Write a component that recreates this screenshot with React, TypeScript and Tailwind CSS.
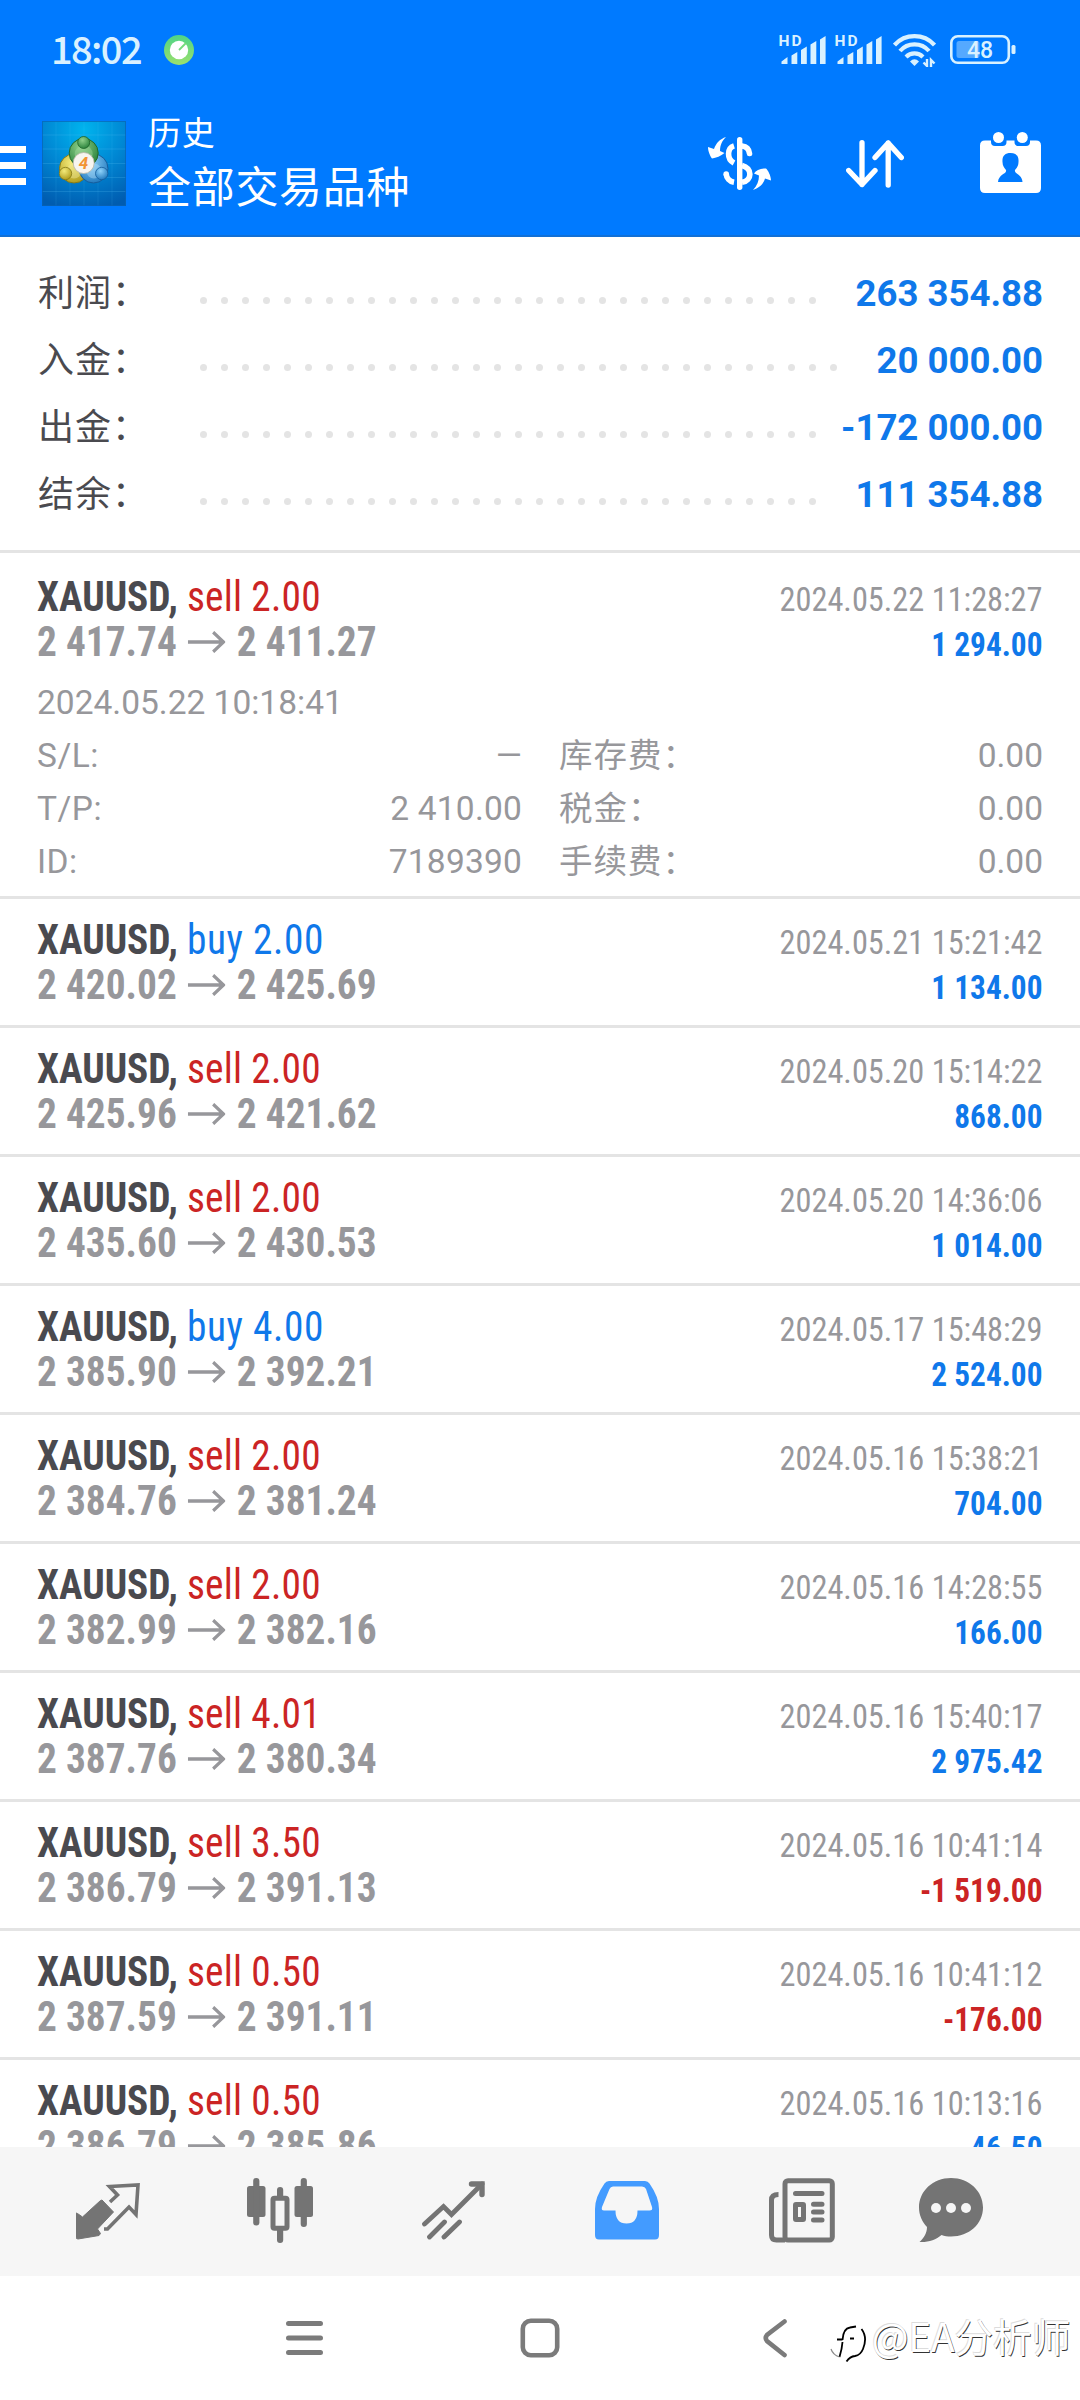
import cn from 'clsx';

interface Deal {
  side: 'buy' | 'sell';
  volume: string;
  open: string;
  close: string;
  time: string;
  profit: string;
}

const summary = [
  { label: '利润\uff1a', value: '263 354.88', dots: 30 },
  { label: '入金\uff1a', value: '20 000.00', dots: 31 },
  { label: '出金\uff1a', value: '-172 000.00', dots: 30 },
  { label: '结余\uff1a', value: '111 354.88', dots: 30 }
];

const deals: Deal[] = [
  { side: 'sell', volume: '2.00', open: '2 417.74', close: '2 411.27', time: '2024.05.22 11:28:27', profit: '1 294.00' },
  { side: 'buy', volume: '2.00', open: '2 420.02', close: '2 425.69', time: '2024.05.21 15:21:42', profit: '1 134.00' },
  { side: 'sell', volume: '2.00', open: '2 425.96', close: '2 421.62', time: '2024.05.20 15:14:22', profit: '868.00' },
  { side: 'sell', volume: '2.00', open: '2 435.60', close: '2 430.53', time: '2024.05.20 14:36:06', profit: '1 014.00' },
  { side: 'buy', volume: '4.00', open: '2 385.90', close: '2 392.21', time: '2024.05.17 15:48:29', profit: '2 524.00' },
  { side: 'sell', volume: '2.00', open: '2 384.76', close: '2 381.24', time: '2024.05.16 15:38:21', profit: '704.00' },
  { side: 'sell', volume: '2.00', open: '2 382.99', close: '2 382.16', time: '2024.05.16 14:28:55', profit: '166.00' },
  { side: 'sell', volume: '4.01', open: '2 387.76', close: '2 380.34', time: '2024.05.16 15:40:17', profit: '2 975.42' },
  { side: 'sell', volume: '3.50', open: '2 386.79', close: '2 391.13', time: '2024.05.16 10:41:14', profit: '-1 519.00' },
  { side: 'sell', volume: '0.50', open: '2 387.59', close: '2 391.11', time: '2024.05.16 10:41:12', profit: '-176.00' },
  { side: 'sell', volume: '0.50', open: '2 386.79', close: '2 385.86', time: '2024.05.16 10:13:16', profit: '46.50' }
];

const details = [
  { left: 'S/L:', value: '—', right: '库存费\uff1a', cost: '0.00' },
  { left: 'T/P:', value: '2 410.00', right: '税金\uff1a', cost: '0.00' },
  { left: 'ID:', value: '7189390', right: '手续费\uff1a', cost: '0.00' }
];

export default function App() {
  return (
    <div className="flex h-[2400px] w-[1080px] flex-col overflow-hidden bg-white [font-family:Roboto,'Noto_Sans_CJK_SC',sans-serif]">
      <StatusBar />
      <Header />
      <main className="h-[1910px] overflow-hidden">
        <section className="h-[316px] border-b-[3px] border-[#e4e4e4] pt-[20px] pr-[37px] pl-[38px]">
          {summary.map((row) => (
            <SummaryRow key={row.label} {...row} />
          ))}
        </section>
        {deals.map((deal, i) => (
          <DealRow key={deal.time} deal={deal} open={i === 0} />
        ))}
      </main>
      <TabBar />
      <SystemNav />
    </div>
  );
}

function StatusBar() {
  return (
    <div className="flex h-[100px] items-start bg-[#007aff] pr-[64px] pl-[51px] text-[#d9f1ff]">
      <span className="mt-[24px] w-[113px] text-[38px] leading-[48px] font-medium tracking-[-1.6px] [font-family:'Noto_Sans_CJK_SC',sans-serif]">
        18:02
      </span>
      <svg className="mt-[35px] h-[30px] w-[30px]" viewBox="0 0 30 30">
        <defs>
          <linearGradient id="green" x1="0" y1="0" x2="0" y2="1">
            <stop offset="0" stopColor="#4fd487" />
            <stop offset="1" stopColor="#9be06c" />
          </linearGradient>
        </defs>
        <circle cx="15" cy="15" r="15" fill="url(#green)" />
        <circle cx="15" cy="15" r="9.2" fill="#fff" />
        <path d="M15 15 L22 8" stroke="#74da7c" strokeWidth="1.8" />
      </svg>
      <div className="ml-auto flex items-start">
        <Signal />
        <Signal />
        <svg className="mt-[33px] ml-[2px] h-[34px] w-[43px]" viewBox="0 0 43 34" fill="none" stroke="currentColor" strokeWidth="4.2">
          <path d="M1.5 12 A27 27 0 0 1 41.5 12" />
          <path d="M7 18 A19 19 0 0 1 36 18" />
          <path d="M13 24 A12 12 0 0 1 30 24" />
          <path d="M21.500 33 L17 28.500 Q21.500 24 26 28.500 Z" fill="currentColor" stroke="none" />
          <path d="M34 26 V33 L30.500 29.500 M38 34 V27 L41.500 30.500" strokeWidth="2.4" />
        </svg>
        <svg className="mt-[35px] ml-[14px] h-[29px] w-[66px]" viewBox="0 0 66 29">
          <rect x="1.300" y="1.300" width="57.500" height="26.400" rx="6.500" fill="none" stroke="currentColor" strokeWidth="2.6" />
          <rect x="6.500" y="6" width="23" height="17" rx="2.500" fill="#55a9ff" />
          <rect x="61.500" y="10" width="4" height="9" rx="1.500" fill="currentColor" />
          <text x="30" y="23" textAnchor="middle" fontSize="23" fontWeight="500" fill="currentColor">
            48
          </text>
        </svg>
      </div>
    </div>
  );
}

function Signal() {
  return (
    <svg className="mt-[30px] h-[36px] w-[56px] overflow-visible" viewBox="0 -4 56 36" fill="currentColor">
      <text x="-0.5" y="12" fontSize="15.5" fontWeight="700" textLength="23">
        HD
      </text>
      <path d="M2.500 30 V27.500 L8.500 23 V30 Z M12.500 30 V21.500 L18.300 18 V30 Z M22 30 V16 L27.800 12.500 V30 Z M31.500 30 V10.500 L37.300 7 V30 Z M41 30 V5.500 L46.600 2 V30 Z" />
    </svg>
  );
}

function Header() {
  return (
    <header className="flex h-[137px] items-start border-b-2 border-[#1170d6] bg-[#007aff] pr-[39px] text-white">
      <div className="mt-[46px] flex w-[26px] flex-col gap-[9px]">
        <span className="h-[7px] bg-white" />
        <span className="h-[7px] bg-white" />
        <span className="h-[7px] bg-white" />
      </div>
      <AppLogo />
      <div className="mt-[7px] ml-[22px] [font-family:'Noto_Sans_CJK_SC',sans-serif]">
        <p className="text-[33px] leading-[48px] tracking-[0.7px]">历史</p>
        <h1 className="text-[43px] leading-[59px] tracking-[0.7px]">全部交易品种</h1>
      </div>
      <svg className="mt-[37px] ml-auto h-[53px] w-[63px]" viewBox="0 0 63 53" fill="none" stroke="currentColor" strokeWidth="5.6">
        <path d="M31.700 2.700 V50.300" strokeLinecap="round" strokeWidth="5.400" />
        <path d="M26 8.800 C19 11 18.500 22 26 26" />
        <path d="M34 9 C38.500 9.500 41 12 41.500 16.500" strokeLinecap="round" />
        <path d="M34 28.500 C44.500 31 44.500 43.500 34 45.300" />
        <path d="M18.200 37 C18.500 41 21.500 44.500 26 45.300" strokeLinecap="butt" />
        <circle cx="18.200" cy="37" r="2.800" fill="currentColor" stroke="none" />
        <path d="M18 0 C12 2 8 6 6 12 L0 10 C0 14 2 19 4 21.500 C8 21 13 19 16.500 16 L12 14 C12 8 14 4 18 0 Z" fill="currentColor" stroke="none" />
        <path d="M45 53 C51 51 55 48 57 41.500 L63 43.500 C63 39 60 33 58 31.500 C53 31.500 48 33 46 36.500 L51 38.500 C51 44 49 49 45 53 Z" fill="currentColor" stroke="none" />
      </svg>
      <svg className="mt-[40px] ml-[75px] h-[48px] w-[58px]" viewBox="0 0 58 48" fill="none" stroke="currentColor" strokeWidth="5.3" strokeLinecap="round" strokeLinejoin="round">
        <path d="M16 2.700 V44.500 M2.700 30.500 L16 44.500 L29 30.500" />
        <path d="M42.200 45 V3 M29 17.500 L42.200 3 L55.300 17.500" />
      </svg>
      <svg className="mt-[32px] ml-[76px] h-[61px] w-[61px]" viewBox="0 0 61 61" fill="currentColor">
        <path d="M5 8.500 H11 V10 Q11 14 15 14 H22.500 Q26.500 14 26.500 10 V8.500 H34.500 V10 Q34.500 14 38.500 14 H46 Q50 14 50 10 V8.500 H56 Q61 8.500 61 13.500 V56 Q61 61 56 61 H5 Q0 61 0 56 V13.500 Q0 8.500 5 8.500 Z" />
        <circle cx="18.500" cy="5.500" r="5.500" />
        <circle cx="42.300" cy="5.500" r="5.500" />
        <path d="M30.500 21 C36 21 39 24 38.500 30 C38.500 34 36.500 36 35 38 C34 42 42 42 42.500 50 H18 C18.500 42 27 42 26 38 C24.500 36 22.500 34 22.500 30 C22 24 25 21 30.500 21 Z" fill="#007aff" />
      </svg>
    </header>
  );
}

function AppLogo() {
  return (
    <svg className="mt-[21px] ml-[16px] h-[85px] w-[84px]" viewBox="0 0 84 85">
      <defs>
        <radialGradient id="sky" cx="0.5" cy="0.1" r="0.95">
          <stop offset="0" stopColor="#00b4ee" />
          <stop offset="0.5" stopColor="#0088d4" />
          <stop offset="1" stopColor="#005cb0" />
        </radialGradient>
        <radialGradient id="leaf" cx="0.4" cy="0.3" r="0.8">
          <stop offset="0" stopColor="#8fd08a" />
          <stop offset="1" stopColor="#1f7a33" />
        </radialGradient>
        <radialGradient id="gold" cx="0.4" cy="0.3" r="0.8">
          <stop offset="0" stopColor="#f3ea7a" />
          <stop offset="1" stopColor="#a99412" />
        </radialGradient>
        <radialGradient id="aqua" cx="0.4" cy="0.3" r="0.8">
          <stop offset="0" stopColor="#8fd3fa" />
          <stop offset="1" stopColor="#1670b8" />
        </radialGradient>
      </defs>
      <rect width="84" height="85" fill="url(#sky)" />
      <path d="M0 14 H84 M0 28 H84 M0 42.500 H84 M0 56.500 H84 M0 70.500 H84" stroke="#5cc4f4" strokeOpacity="0.22" />
      <path d="M14 0 V85 M28 0 V85 M42 0 V85 M56 0 V85 M70 0 V85" stroke="#5cc4f4" strokeOpacity="0.12" />
      <rect x="0.500" y="0.500" width="83" height="84" fill="none" stroke="#0a62b4" strokeOpacity="0.7" />
      <circle cx="32" cy="47.500" r="14.500" fill="url(#gold)" stroke="#857a18" />
      <circle cx="51.500" cy="47.500" r="14.500" fill="url(#aqua)" stroke="#155d9c" />
      <circle cx="41.700" cy="32" r="14.500" fill="url(#leaf)" stroke="#226b2c" />
      <circle cx="41.700" cy="33" r="9" fill="#a5dba0" fillOpacity="0.4" />
      <circle cx="32" cy="50" r="7.500" fill="#f6f0a6" fillOpacity="0.4" />
      <circle cx="52" cy="50" r="7.500" fill="#b9e4fc" fillOpacity="0.4" />
      <circle cx="41.700" cy="21.500" r="6" fill="url(#leaf)" stroke="#1c6228" strokeWidth="0.800" />
      <circle cx="23.500" cy="52.500" r="6.200" fill="url(#gold)" stroke="#857a18" strokeWidth="0.800" />
      <circle cx="59.700" cy="52.500" r="6.200" fill="url(#aqua)" stroke="#155d9c" strokeWidth="0.800" />
      <circle cx="41.700" cy="42" r="10.500" fill="#f7f5f0" stroke="#b9b5a6" strokeWidth="0.800" />
      <text x="41.500" y="48" textAnchor="middle" fontSize="17" fontWeight="700" fontStyle="italic" fill="#f29433">
        4
      </text>
    </svg>
  );
}

function SummaryRow({ label, value, dots }: { label: string; value: string; dots: number }) {
  return (
    <div className="flex h-[67px] items-start">
      <span className="w-[162px] text-[36px] leading-[67px] tracking-[1px] whitespace-nowrap text-[#4a4a4f] [font-family:'Noto_Sans_CJK_SC',sans-serif]">
        {label}
      </span>
      <div className="mt-[40px] flex gap-[14px]">
        {Array.from({ length: dots }, (_, i) => (
          <span key={i} className="h-[7px] w-[7px] rounded-full bg-[#e4e4e4]" />
        ))}
      </div>
      <span className="mt-[3px] ml-auto text-[36.6px] leading-[67px] font-bold whitespace-nowrap text-[#0f78ea]">
        {value}
      </span>
    </div>
  );
}

function DealRow({ deal, open }: { deal: Deal; open: boolean }) {
  return (
    <div className={cn('border-b-[3px] border-[#e4e4e4] px-[37px]', open ? 'h-[346px] pt-[21px]' : 'h-[129px] pt-[18px]')}>
      <div className="flex justify-between font-stretch-condensed [font-family:'Roboto_Condensed',Roboto,sans-serif]">
        <div className="origin-left scale-x-[0.937] text-[42px] leading-[45px]">
          <p className="whitespace-nowrap">
            <b className="font-bold text-[#4a4a4f]">XAUUSD,</b>{' '}
            <span className={deal.side === 'buy' ? 'tracking-[0.6px] text-[#0f78ea]' : 'tracking-[0.2px] text-[#cb2424]'}>
              {deal.side} {deal.volume}
            </span>
          </p>
          <p className="flex items-center font-bold text-[#97979b]">
            {deal.open}
            <svg className="mx-[12px] h-[22px] w-[40px]" viewBox="0 0 40 22" fill="none" stroke="currentColor" strokeWidth="3.400">
              <path d="M0 11 H38 M27 1.200 L38 11 L27 20.800" />
            </svg>
            {deal.close}
          </p>
        </div>
        <div className="text-right text-[33.500px] leading-[45px] whitespace-nowrap">
          <p className="origin-right scale-x-[0.965] pt-[3px] text-[#97979b]">{deal.time}</p>
          <p className={cn('origin-right scale-x-[0.935] font-bold', deal.profit.startsWith('-') ? 'text-[#cb2424]' : 'text-[#0f78ea]')}>
            {deal.profit}
          </p>
        </div>
      </div>
      {open && (
        <div className="mt-[9px] text-[33.500px] leading-[53px] text-[#97979b]">
          <p className="h-[53px]">2024.05.22 10:18:41</p>
          {details.map((row) => (
            <div key={row.left} className="flex h-[53px]">
              <span className="tracking-[0.5px]">{row.left}</span>
              <span className="ml-auto tracking-[0.2px]">{row.value}</span>
              <span className="-mt-[3px] ml-[37px] w-[300px] tracking-[1px] [font-family:'Noto_Sans_CJK_SC',sans-serif]">
                {row.right}
              </span>
              <span className="w-[184px] text-right">{row.cost}</span>
            </div>
          ))}
        </div>
      )}
    </div>
  );
}

function TabBar() {
  return (
    <nav className="flex h-[129px] items-start bg-[#f6f6f6] pl-[76px] text-[#747474]">
      <svg className="mt-[36px] h-[57px] w-[64px]" viewBox="0 0 64 57">
        <path d="M26 17 L37.500 29 L21.500 46 L24.500 50.500 L23 52.500 L2 56 Q0 56 0 54 V30 L1.500 30.500 L6.500 34 L24.500 17.500 Z" fill="currentColor" stroke="currentColor" strokeWidth="1" strokeLinejoin="round" />
        <path d="M34 19 L41.500 12 L33.500 3.500 L62 2 L60 31.500 L53 24 L31.500 46 H28" fill="none" stroke="currentColor" strokeWidth="3.600" />
      </svg>
      <svg className="mt-[31px] ml-[107px] h-[65px] w-[66px]" viewBox="0 0 66 65" fill="currentColor">
        <rect x="0" y="8" width="18.500" height="31" rx="2.500" />
        <rect x="6.200" y="0" width="6.200" height="47.500" rx="3" />
        <rect x="47.500" y="8" width="18.500" height="31" rx="2.500" />
        <rect x="53.700" y="0" width="6.200" height="49" rx="3" />
        <rect x="30" y="9" width="6.200" height="12" rx="3" />
        <rect x="30" y="48" width="6.200" height="17" rx="3" />
        <rect x="26" y="20.200" width="14" height="30" rx="1.500" fill="none" stroke="currentColor" strokeWidth="5" />
      </svg>
      <svg className="mt-[34px] ml-[109px] h-[59px] w-[63px]" viewBox="0 0 63 59" fill="none" stroke="currentColor" strokeWidth="4.800" strokeLinecap="round">
        <path d="M2.500 43 L21.500 25.500 L29.500 33.500 L60 3" />
        <path d="M49.500 3 H60 V13.500" strokeWidth="5.400" />
        <path d="M7.500 56 L22.500 41 M22 56 L37.500 41" />
      </svg>
      <svg className="mt-[34px] ml-[110px] h-[59px] w-[64px]" viewBox="0 0 64 59">
        <path fillRule="evenodd" d="M14 0 H50 Q53 0 54.500 2.500 Q64 16 64 28 V54 Q64 58.500 60 58.500 H4 Q0 58.500 0 54 V28 Q0 16 9.500 2.500 Q11 0 14 0 Z M18 5.500 Q15.500 5.500 14.500 8 L7 26 Q6 29.500 9 29.500 H20.500 Q20.500 42.500 31.500 42.500 Q42.500 42.500 42.500 29.500 H54.500 Q58 29.500 57 26 L51 8 Q50 5.500 47 5.500 Z" fill="#439bff" />
      </svg>
      <svg className="mt-[31px] ml-[110px] h-[65px] w-[66px]" viewBox="0 0 66 65" fill="none" stroke="currentColor" strokeWidth="5">
        <rect x="16" y="2.700" width="47.300" height="59.300" rx="3" />
        <path d="M9.500 16.500 Q2.500 16.500 2.500 22 V57 Q2.500 62 7.500 62 H16" />
        <path d="M26.500 15.500 H53 M44.500 26.200 H53 M44.500 34 H53 M44.500 42 H53" strokeLinecap="round" />
        <rect x="26.500" y="26.500" width="8" height="15" rx="0.500" />
      </svg>
      <svg className="mt-[31px] ml-[84px] h-[65px] w-[64px]" viewBox="0 0 64 65">
        <path d="M32 0 C50 0 64 13 64 29.500 C64 46 50 58.500 32 58.500 C28.500 58.500 25.500 58 22.500 57 C17 62 9 64.500 0.500 64 C5 60 8 55 8 49 C3 43.500 0 37 0 29.500 C0 13 14 0 32 0 Z" fill="currentColor" />
        <circle cx="17" cy="30" r="5" fill="#f6f6f6" />
        <circle cx="32" cy="30" r="5" fill="#f6f6f6" />
        <circle cx="47" cy="30" r="5" fill="#f6f6f6" />
      </svg>
    </nav>
  );
}

function SystemNav() {
  return (
    <div className="relative flex h-[124px] items-start pt-[42px] pl-[286px] text-[#7b7b7b]">
      <svg className="h-[40px] w-[37px]" viewBox="0 0 37 40" stroke="currentColor" strokeWidth="5" strokeLinecap="round">
        <path d="M2.500 5.500 H34.500 M2.500 20 H34.500 M2.500 34.500 H34.500" />
      </svg>
      <svg className="ml-[197px] h-[40px] w-[40px]" viewBox="0 0 40 40" fill="none" stroke="currentColor" strokeWidth="4.600">
        <rect x="2.800" y="2.800" width="34.400" height="34.400" rx="8" />
      </svg>
      <svg className="ml-[202px] h-[40px] w-[26px]" viewBox="0 0 26 40" fill="none" stroke="currentColor" strokeWidth="4.600" strokeLinecap="round">
        <path d="M22.500 3.500 L5 17 Q2.500 20 5 23 L22.500 37" />
      </svg>
      <div className="absolute top-[31px] right-[10px] flex items-start">
        <svg className="mt-[17px] h-[40px] w-[38px]" viewBox="0 0 38 40" fill="none">
          <path d="M12.500 18 Q12 25 9.500 33 M7 15.500 H12.500 M12.500 16 C13 8 16 4 20 3.500 L26 2.500" stroke="#000" strokeWidth="1.800" />
          <path d="M31.500 5 C36 11 35.500 19 33 25 C31 30 28 31.500 25 32 C21 32.500 19 34 16.500 37.500" stroke="#000" strokeWidth="1.800" />
          <path d="M20 14.500 H24" stroke="#000" strokeWidth="2" />
          <path d="M1 25 Q3 31 9.500 33" stroke="#8a8a8a" strokeWidth="1.200" />
        </svg>
        <span className="ml-[4px] text-[39px] leading-[56px] font-normal tracking-[-0.4px] whitespace-nowrap text-white [font-family:'Noto_Sans_CJK_SC',sans-serif] [text-shadow:0.8px_0.8px_0_#333,-0.7px_-0.7px_0_#dcdcdc]">
          @EA分析师
        </span>
      </div>
    </div>
  );
}
